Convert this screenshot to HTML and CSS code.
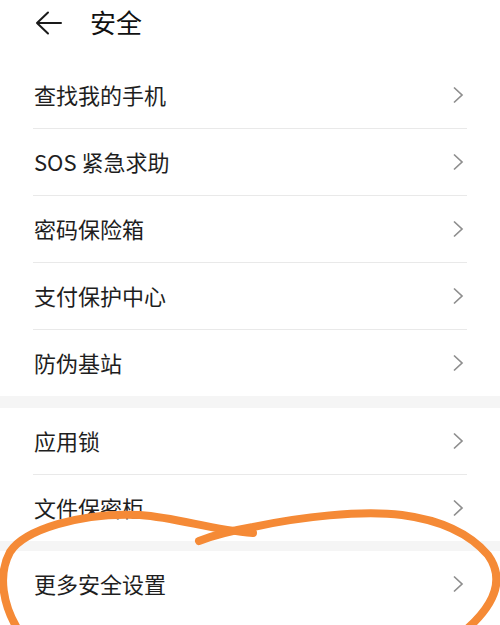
FILE: index.html
```html
<!DOCTYPE html>
<html lang="zh">
<head>
<meta charset="utf-8">
<link rel="stylesheet" href="styles.css">
</head>
<body>
<div class="page">
  <header class="header">
    <svg class="back" width="28" height="24" viewBox="0 0 28 24"><path d="M13 1.5 L2 12 L13 22.5 M2 12 H26" fill="none" stroke="#1a1a1a" stroke-width="2" stroke-linecap="round" stroke-linejoin="round"/></svg>
    <h1 class="title">安全</h1>
  </header>
  <div class="group">
    <div class="row"><span class="label">查找我的手机</span><svg class="chev" width="12" height="18" viewBox="0 0 12 18"><path d="M2 1.5 L10 9 L2 16.5" fill="none" stroke="#8e8e8e" stroke-width="1.7"/></svg></div>
    <div class="row"><span class="label">SOS 紧急求助</span><svg class="chev" width="12" height="18" viewBox="0 0 12 18"><path d="M2 1.5 L10 9 L2 16.5" fill="none" stroke="#8e8e8e" stroke-width="1.7"/></svg></div>
    <div class="row"><span class="label">密码保险箱</span><svg class="chev" width="12" height="18" viewBox="0 0 12 18"><path d="M2 1.5 L10 9 L2 16.5" fill="none" stroke="#8e8e8e" stroke-width="1.7"/></svg></div>
    <div class="row"><span class="label">支付保护中心</span><svg class="chev" width="12" height="18" viewBox="0 0 12 18"><path d="M2 1.5 L10 9 L2 16.5" fill="none" stroke="#8e8e8e" stroke-width="1.7"/></svg></div>
    <div class="row"><span class="label">防伪基站</span><svg class="chev" width="12" height="18" viewBox="0 0 12 18"><path d="M2 1.5 L10 9 L2 16.5" fill="none" stroke="#8e8e8e" stroke-width="1.7"/></svg></div>
  </div>
  <div class="band band-a"></div>
  <div class="group">
    <div class="row"><span class="label">应用锁</span><svg class="chev" width="12" height="18" viewBox="0 0 12 18"><path d="M2 1.5 L10 9 L2 16.5" fill="none" stroke="#8e8e8e" stroke-width="1.7"/></svg></div>
    <div class="row"><span class="label">文件保密柜</span><svg class="chev" width="12" height="18" viewBox="0 0 12 18"><path d="M2 1.5 L10 9 L2 16.5" fill="none" stroke="#8e8e8e" stroke-width="1.7"/></svg></div>
  </div>
  <div class="band band-b"></div>
  <div class="group">
    <div class="row"><span class="label">更多安全设置</span><svg class="chev" width="12" height="18" viewBox="0 0 12 18"><path d="M2 1.5 L10 9 L2 16.5" fill="none" stroke="#8e8e8e" stroke-width="1.7"/></svg></div>
  </div>
  <svg class="scribble" width="500" height="625" viewBox="0 0 500 625">
    <path d="M17,628 C4,606 -3,576 10,552 C24,530 80,512 140,515 C180,518 210,530 253,533" fill="none" stroke="#f58a36" stroke-width="8" stroke-linecap="round"/>
    <path d="M199,541 C214,535 230,531 253,527 C300,517 360,510 402,515 C440,520 470,534 488,555 C503,576 499,600 468,628" fill="none" stroke="#f58a36" stroke-width="8" stroke-linecap="round"/>
  </svg>
</div>
</body>
</html>
```
FILE: styles.css
```css
html, body {
  margin: 0;
  padding: 0;
  background: #ffffff;
}
body {
  font-family: "Noto Sans CJK SC", "Noto Sans", sans-serif;
  color: #1c1c1c;
  overflow: hidden;
}
.page {
  position: relative;
  width: 500px;
  height: 625px;
  overflow: hidden;
}
.header {
  display: flex;
  align-items: center;
  height: 46px;
  padding-left: 35px;
  margin-bottom: 16px;
}
.back {
  display: block;
}
.title {
  margin: 0 0 0 27px;
  font-size: 26px;
  font-weight: 400;
  line-height: 1;
  color: #111111;
  position: relative;
  top: -1px;
}
.group {
  margin: 0 33px;
}
.row {
  display: flex;
  align-items: center;
  justify-content: space-between;
  height: 66px;
  border-bottom: 1px solid #e9e9e9;
  padding-left: 1px;
  padding-right: 3px;
}
.row:last-child {
  border-bottom: none;
}
.label {
  font-size: 22px;
  line-height: 1;
  color: #1e1e1e;
  margin-bottom: 3px;
}
.chev {
  display: block;
}
.band {
  background: #f5f5f5;
}
.band-a {
  height: 12px;
}
.band-b {
  height: 10px;
}
.scribble {
  position: absolute;
  left: 0;
  top: 0;
  pointer-events: none;
}
```
